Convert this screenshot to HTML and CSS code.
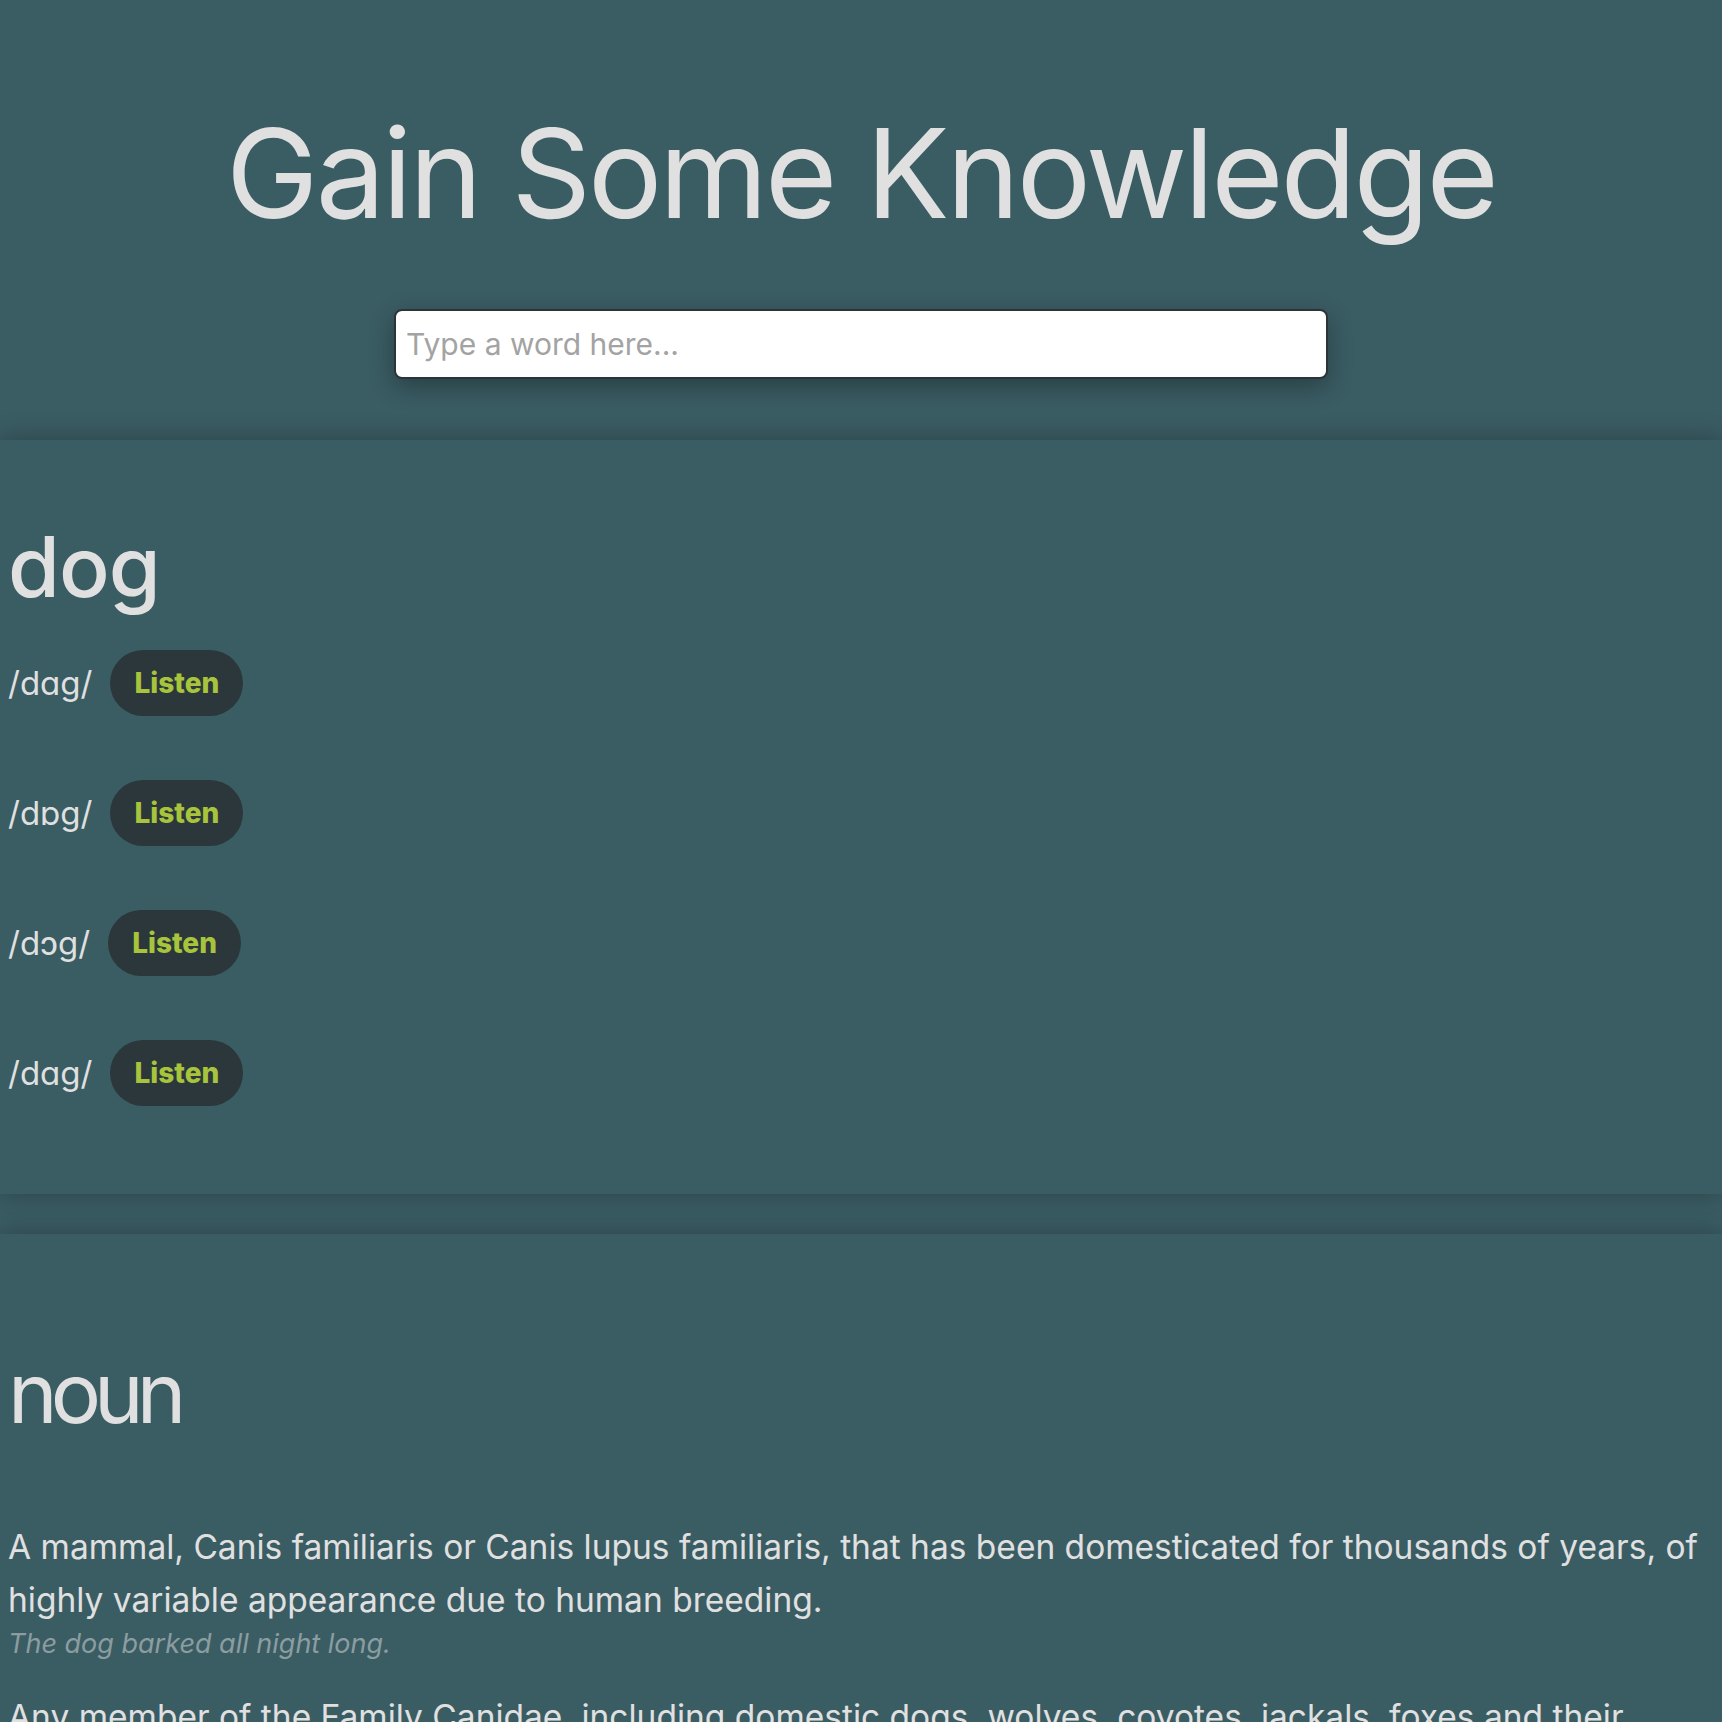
FILE: index.html
```html
<!DOCTYPE html>
<html lang="en">
<head>
<meta charset="utf-8">
<title>Gain Some Knowledge</title>
<link rel="stylesheet" href="styles.css">
</head>
<body>
<header class="header">
  <h1 class="title">Gain Some Knowledge</h1>
  <input class="search" type="text" placeholder="Type a word here...">
</header>
<section class="card word-card">
  <h2 class="heading">dog</h2>
  <div class="phonetics">
    <div class="phonetic-row"><span class="phonetic">/dɑg/</span><button class="listen">Listen</button></div>
    <div class="phonetic-row"><span class="phonetic">/dɒg/</span><button class="listen">Listen</button></div>
    <div class="phonetic-row"><span class="phonetic">/dɔg/</span><button class="listen">Listen</button></div>
    <div class="phonetic-row"><span class="phonetic">/dɑg/</span><button class="listen">Listen</button></div>
  </div>
</section>
<section class="card meaning-card">
  <h2 class="heading heading-pos">noun</h2>
  <div class="definitions">
    <div class="definition">
      <p class="def-text">A mammal, Canis familiaris or Canis lupus familiaris, that has been domesticated for thousands of years, of highly variable appearance due to human breeding.</p>
      <p class="example">The dog barked all night long.</p>
    </div>
    <div class="definition">
      <p class="def-text">Any member of the Family Canidae, including domestic dogs, wolves, coyotes, jackals, foxes and their relatives (extant and extinct); canid.</p>
    </div>
  </div>
</section>
</body>
</html>
```
FILE: styles.css
```css
html, body {
  margin: 0;
  padding: 0;
}
body {
  background: #3a5c63;
  color: #e0e0e0;
  font-family: Inter, "Noto Sans", "Liberation Sans", sans-serif;
}
.header {
  display: flex;
  flex-direction: column;
  align-items: center;
  padding: 96px 8px 61px;
}
.title {
  margin: 0 0 59px;
  font-size: 124px;
  font-weight: 400;
  line-height: 154px;
  letter-spacing: -3px;
  color: #e0e0e0;
}
.search {
  box-sizing: border-box;
  width: 934px;
  height: 70px;
  border: 2px solid #2b3538;
  border-radius: 8px;
  background: #fff;
  padding: 0 10px;
  font-family: Inter, "Noto Sans", sans-serif;
  font-size: 30px;
  color: #333;
  box-shadow: 0 8px 24px rgba(0, 0, 0, 0.3);
  outline: none;
}
.search::placeholder {
  color: #a3a3a3;
}
.card {
  background: #3a5c63;
  box-shadow: 0 0 24px rgba(0, 0, 0, 0.28);
  padding: 0 8px;
  position: relative;
}
.word-card {
  padding-top: 85px;
  padding-bottom: 88px;
  margin-bottom: 40px;
}
.meaning-card {
  padding-top: 117px;
  padding-bottom: 40px;
}
.heading {
  margin: 0;
  font-size: 84px;
  font-weight: 500;
  line-height: 84px;
  letter-spacing: -1px;
  color: #e0e0e0;
}
.heading-pos {
  font-weight: 400;
  letter-spacing: -7px;
}
.phonetics {
  display: flex;
  flex-direction: column;
  gap: 64px;
  margin-top: 41px;
}
.phonetic-row {
  display: flex;
  align-items: center;
  gap: 18px;
}
.phonetic {
  font-size: 33px;
  color: #e0e0e0;
}
.listen {
  height: 66px;
  padding: 0 24px;
  border: none;
  border-radius: 33px;
  background: #2b373a;
  color: #a8c43d;
  font-family: Inter, "Noto Sans", sans-serif;
  font-size: 28px;
  font-weight: 800;
  cursor: pointer;
}
.definitions {
  display: flex;
  flex-direction: column;
  gap: 30px;
  margin-top: 86px;
}
.definition p {
  margin: 0;
}
.def-text {
  font-size: 33.5px;
  line-height: 53px;
  color: #e0e0e0;
}
.example {
  margin-top: 12px;
  font-size: 27px;
  line-height: 34px;
  font-style: italic;
  color: #8c9da1;
}
```
